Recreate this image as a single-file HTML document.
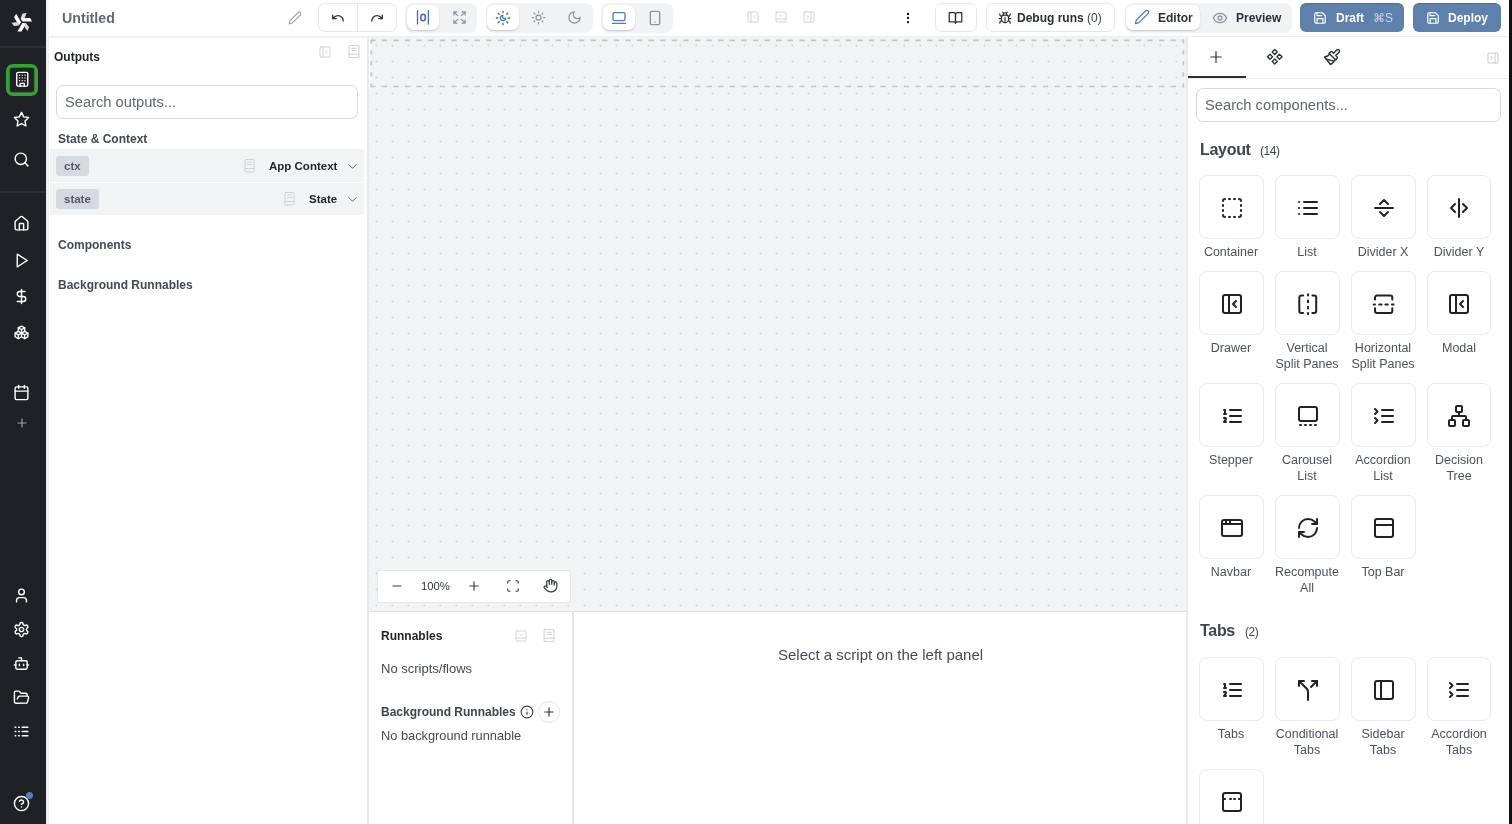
<!DOCTYPE html>
<html><head><meta charset="utf-8">
<style>
*{box-sizing:border-box;margin:0;padding:0}
html,body{width:1512px;height:824px;overflow:hidden;background:#fff;font-family:"Liberation Sans",sans-serif;color:#2d3748}
.a{position:absolute}
svg{display:block;position:absolute;fill:none;stroke-linecap:round;stroke-linejoin:round}
.t{position:absolute;white-space:nowrap;line-height:1}
body{-webkit-font-smoothing:antialiased}
.t,.lbl{will-change:transform}
#sidebar{position:absolute;left:0;top:0;width:46px;height:824px;background:#202125}
.sdiv{position:absolute;left:0;width:46px;height:2px;background:#2c2f36}
.si{stroke:#fff;stroke-width:2}
#header{position:absolute;left:46px;top:0;width:1466px;height:38px;background:#fff;border-bottom:2px solid #eeeff1}
#left{position:absolute;left:46px;top:38px;width:323px;height:786px;background:#fff;border-left:3px solid #eef0f2;border-right:2px solid #e6e8eb}
#canvas{position:absolute;left:369px;top:37px;width:817px;height:575px;background-color:#f2f3f5;border-bottom:1px solid #dfe1e5}
#right{position:absolute;left:1186px;top:37px;width:326px;height:787px;background:#fff;border-left:2px solid #e8eaed}
#bottom{position:absolute;left:369px;top:612px;width:817px;height:212px;background:#fff}
.box{position:absolute;width:64.5px;height:64px;border:1.5px solid #eaebee;border-radius:8px;background:#fff}
.box svg{left:18.7px;top:18.7px;stroke:#1f2329;stroke-width:2}
.lbl{position:absolute;width:80px;text-align:center;font-size:12.5px;line-height:16px;color:#4b5260}
.grp{position:absolute;top:3px;height:29.5px;background:#f1f2f4;border-radius:8px}
.act{position:absolute;top:1.6px;height:25.8px;background:#fff;border-radius:7px;box-shadow:0 1px 2px rgba(0,0,0,.12),0 1px 1px rgba(0,0,0,.06)}
.obtn{position:absolute;top:2.5px;height:29.5px;border:1px solid #e6e7ea;border-radius:7px;background:#fff}
.pbtn{position:absolute;top:2.5px;height:29.8px;background:#5e80ad;border-radius:6px;border-top:1px solid #4f6d95}
</style></head><body>

<!-- SIDEBAR -->
<div id="sidebar">
  <svg style="left:0;top:0" width="46" height="46" viewBox="0 0 46 46"><g transform="translate(21.9,22.3)">
<g id="bl"><path d="M-1.3 -4.3 L8.2 -4.3 L10.2 -0.7 L0.4 -0.7 Z" fill="#fff"/><path d="M0.7 -8.7 L4.8 -9.2 L2.7 -4.4 L-1.3 -4.1 Z" fill="#dcdcdc"/></g>
<use href="#bl" transform="rotate(-120)"/><use href="#bl" transform="rotate(-240)"/></g></svg>
  <div class="sdiv" style="top:46px"></div>
  <div class="a" style="left:6.3px;top:63.7px;width:31.7px;height:32.2px;border:3.2px solid #34a334;border-radius:7px;box-shadow:inset 0 0 0 0.6px #5e9f5e, inset 0 0 2px 1.5px #0b420b"></div>
  <svg class="si" style="left:13.8px;top:71px;stroke-width:2" width="16.5" height="16.5" viewBox="0 0 24 24"><rect width="16" height="20" x="4" y="2" rx="2"/><path d="M9 22v-4h6v4"/><path d="M8 6h.01M16 6h.01M12 6h.01M12 10h.01M12 14h.01M16 10h.01M16 14h.01M8 10h.01M8 14h.01"/></svg>
  <svg class="si" style="left:13px;top:111px" width="17" height="17" viewBox="0 0 24 24"><polygon points="12 2 15.09 8.26 22 9.27 17 14.14 18.18 21.02 12 17.77 5.82 21.02 7 14.14 2 9.27 8.91 8.26 12 2"/></svg>
  <svg class="si" style="left:13px;top:151px" width="17" height="17" viewBox="0 0 24 24"><circle cx="11" cy="11" r="8"/><path d="m21 21-4.3-4.3"/></svg>
  <div class="sdiv" style="top:191px"></div>
  <svg class="si" style="left:13px;top:215px" width="17" height="17" viewBox="0 0 24 24"><path d="M15 21v-8a1 1 0 0 0-1-1h-4a1 1 0 0 0-1 1v8"/><path d="M3 10a2 2 0 0 1 .709-1.528l7-5.999a2 2 0 0 1 2.582 0l7 5.999A2 2 0 0 1 21 10v9a2 2 0 0 1-2 2H5a2 2 0 0 1-2-2z"/></svg>
  <svg class="si" style="left:13px;top:252px" width="17" height="17" viewBox="0 0 24 24"><polygon points="6 3 20 12 6 21 6 3"/></svg>
  <svg class="si" style="left:13px;top:288px" width="17" height="17" viewBox="0 0 24 24"><line x1="12" x2="12" y1="2" y2="22"/><path d="M17 5H9.5a3.5 3.5 0 0 0 0 7h5a3.5 3.5 0 0 1 0 7H6"/></svg>
  <svg class="si" style="left:13px;top:324px" width="17" height="17" viewBox="0 0 24 24"><path d="M12 3 7.5 5.5v5L12 13l4.5-2.5v-5z"/><path d="M7.5 10.5 3 13v5l4.5 2.5L12 18v-5"/><path d="M16.5 10.5 21 13v5l-4.5 2.5L12 18"/><path d="M7.5 5.5 12 8l4.5-2.5M12 8v5M3 13l4.5 2.5L12 13M12 13l4.5 2.5L21 13M7.5 15.5v5M16.5 15.5v5"/></svg>
  <svg class="si" style="left:13px;top:384px" width="17" height="17" viewBox="0 0 24 24"><rect width="18" height="18" x="3" y="4" rx="2"/><line x1="16" x2="16" y1="2" y2="6"/><line x1="8" x2="8" y1="2" y2="6"/><line x1="3" x2="21" y1="10" y2="10"/></svg>
  <svg style="left:15px;top:416px;stroke:#9ea3ab;stroke-width:2" width="14" height="14" viewBox="0 0 24 24"><path d="M5 12h14M12 5v14"/></svg>
  <svg class="si" style="left:13px;top:587px" width="17" height="17" viewBox="0 0 24 24"><path d="M19 21v-2a4 4 0 0 0-4-4H9a4 4 0 0 0-4 4v2"/><circle cx="12" cy="7" r="4"/></svg>
  <svg class="si" style="left:13px;top:621px" width="17" height="17" viewBox="0 0 24 24"><path d="M12.22 2h-.44a2 2 0 0 0-2 2v.18a2 2 0 0 1-1 1.73l-.43.25a2 2 0 0 1-2 0l-.15-.08a2 2 0 0 0-2.73.73l-.22.38a2 2 0 0 0 .73 2.73l.15.1a2 2 0 0 1 1 1.72v.51a2 2 0 0 1-1 1.74l-.15.09a2 2 0 0 0-.73 2.73l.22.38a2 2 0 0 0 2.73.73l.15-.08a2 2 0 0 1 2 0l.43.25a2 2 0 0 1 1 1.73V20a2 2 0 0 0 2 2h.44a2 2 0 0 0 2-2v-.18a2 2 0 0 1 1-1.73l.43-.25a2 2 0 0 1 2 0l.15.08a2 2 0 0 0 2.73-.73l.22-.39a2 2 0 0 0-.73-2.73l-.15-.08a2 2 0 0 1-1-1.74v-.5a2 2 0 0 1 1-1.74l.15-.09a2 2 0 0 0 .73-2.73l-.22-.38a2 2 0 0 0-2.73-.73l-.15.08a2 2 0 0 1-2 0l-.43-.25a2 2 0 0 1-1-1.73V4a2 2 0 0 0-2-2z"/><circle cx="12" cy="12" r="3"/></svg>
  <svg class="si" style="left:13px;top:655px" width="17" height="17" viewBox="0 0 24 24"><path d="M12 8V4H8"/><rect width="16" height="12" x="4" y="8" rx="2"/><path d="M2 14h2M20 14h2M15 13v2M9 13v2"/></svg>
  <svg class="si" style="left:13px;top:689px" width="17" height="17" viewBox="0 0 24 24"><path d="m6 14 1.5-2.9A2 2 0 0 1 9.24 10H20a2 2 0 0 1 1.94 2.5l-1.54 6a2 2 0 0 1-1.95 1.5H4a2 2 0 0 1-2-2V5a2 2 0 0 1 2-2h3.9a2 2 0 0 1 1.69.9l.81 1.2a2 2 0 0 0 1.67.9H18a2 2 0 0 1 2 2v2"/></svg>
  <svg class="si" style="left:13px;top:723px" width="17" height="17" viewBox="0 0 24 24"><path d="M13 12h8M13 18h8M13 6h8M3 12h1M3 18h1M3 6h1M8 12h1M8 18h1M8 6h1"/></svg>
  <svg class="si" style="left:13px;top:795px" width="17" height="17" viewBox="0 0 24 24"><circle cx="12" cy="12" r="10"/><path d="M9.09 9a3 3 0 0 1 5.83 1c0 2-3 3-3 3"/><path d="M12 17h.01"/></svg>
  <div class="a" style="left:26px;top:792px;width:7px;height:7px;border-radius:50%;background:#5a7eb0"></div>
</div>

<!-- HEADER -->
<div id="header"></div>
<div class="t" style="left:62px;top:11px;font-size:14.2px;font-weight:700;color:#626975">Untitled</div>
<svg style="left:288px;top:11px;stroke:#a0a5ad;stroke-width:2" width="14" height="14" viewBox="0 0 24 24"><path d="M17 3a2.85 2.83 0 1 1 4 4L7.5 20.5 2 22l1.5-5.5Z"/></svg>
<div class="obtn" style="left:318px;width:78.5px"></div>
<div class="a" style="left:357px;top:3px;width:1px;height:29px;background:#e6e7ea"></div>
<svg style="left:331px;top:11px;stroke:#2a2f38;stroke-width:2.2" width="14" height="14" viewBox="0 0 24 24"><path d="M3 7v6h6"/><path d="M21 17a9 9 0 0 0-9-9 9 9 0 0 0-6 2.3L3 13"/></svg>
<svg style="left:370px;top:11px;stroke:#2a2f38;stroke-width:2.2" width="14" height="14" viewBox="0 0 24 24"><path d="M21 7v6h-6"/><path d="M3 17a9 9 0 0 1 9-9 9 9 0 0 1 6 2.3l3 2.7"/></svg>

<div class="grp" style="left:405px;width:72px"></div>
<div class="act" style="left:406.7px;top:4.6px;width:32px"></div>
<svg style="left:404px;top:2px;stroke:#4a6cae" width="36" height="32" viewBox="0 0 36 32"><path d="M13.5 8.6v13.4M24.4 8.6v13.4" stroke-width="1.3"/><rect x="16.9" y="12.4" width="4.4" height="6.4" rx="2.2" stroke-width="1.6"/></svg>
<svg style="left:452px;top:10px;stroke:#8e949c;stroke-width:2" width="15" height="15" viewBox="0 0 24 24"><path d="m21 21-6-6m6 6v-4.8m0 4.8h-4.8"/><path d="M3 16.2V21m0 0h4.8M3 21l6-6"/><path d="M21 7.8V3m0 0h-4.8M21 3l-6 6"/><path d="M3 7.8V3m0 0h4.8M3 3l6 6"/></svg>

<div class="grp" style="left:486px;width:106.5px"></div>
<div class="act" style="left:487px;top:4.6px;width:32px"></div>
<svg style="left:495px;top:9.5px;stroke-width:2" width="16" height="16" viewBox="0 0 24 24"><path stroke="#4f7bc4" d="M12 8a2.83 2.83 0 0 0 4 4 4 4 0 1 1-4-4"/><path stroke="#5b616b" d="M12 2v2M12 20v2m-7.1-17.1 1.4 1.4m11.4 11.4 1.4 1.4M2 12h2m16 0h2M6.3 17.7l-1.4 1.4M19.1 4.9l-1.4 1.4"/></svg>
<svg style="left:531px;top:10px;stroke:#8e949c;stroke-width:2" width="15" height="15" viewBox="0 0 24 24"><circle cx="12" cy="12" r="4"/><path d="M12 2v2M12 20v2m-7.07-17.07 1.41 1.41m11.32 11.32 1.41 1.41M2 12h2m16 0h2M6.34 17.66l-1.41 1.41M19.07 4.93l-1.41 1.41"/></svg>
<svg style="left:567px;top:10px;stroke:#8e949c;stroke-width:2" width="15" height="15" viewBox="0 0 24 24"><path d="M12 3a6 6 0 0 0 9 9 9 9 0 1 1-9-9Z"/></svg>

<div class="grp" style="left:601px;width:71.5px"></div>
<div class="act" style="left:602.8px;top:4.6px;width:32.2px"></div>
<svg style="left:611px;top:10px;stroke:#4f7bc4;stroke-width:2" width="16" height="16" viewBox="0 0 24 24"><rect width="18" height="12" x="3" y="4" rx="2"/><line x1="2" x2="22" y1="20" y2="20"/></svg>
<svg style="left:647px;top:10px;stroke:#8e949c;stroke-width:2" width="16" height="16" viewBox="0 0 24 24"><rect width="14" height="20" x="5" y="2" rx="2"/><path d="M12 18h.01"/></svg>

<svg style="left:747px;top:11px;stroke:#cfd2d7;stroke-width:2" width="12" height="12" viewBox="0 0 24 24"><rect width="20" height="20" x="2" y="2" rx="2"/><path d="M8 2v20"/><path d="m16 15-3-3 3-3"/></svg>
<svg style="left:775px;top:11px;stroke:#cfd2d7;stroke-width:2" width="12" height="12" viewBox="0 0 24 24"><rect width="20" height="20" x="2" y="2" rx="2"/><path d="M2 16h20"/><path d="m15 8-3 3-3-3"/></svg>
<svg style="left:803px;top:11px;stroke:#cfd2d7;stroke-width:2" width="12" height="12" viewBox="0 0 24 24"><rect width="20" height="20" x="2" y="2" rx="2"/><path d="M16 2v20"/><path d="m8 9 3 3-3 3"/></svg>
<svg style="left:901px;top:10.5px;fill:#111;stroke:#111;stroke-width:2" width="14" height="14" viewBox="0 0 24 24"><circle cx="12" cy="12" r="1"/><circle cx="12" cy="5" r="1"/><circle cx="12" cy="19" r="1"/></svg>

<div class="obtn" style="left:935.3px;width:41.3px"></div>
<svg style="left:948px;top:10px;stroke:#2a2f38;stroke-width:2" width="15" height="15" viewBox="0 0 24 24"><path d="M2 4h7a3 3 0 0 1 3 3v14a2 2 0 0 0-2-2H2z"/><path d="M22 4h-7a3 3 0 0 0-3 3v14a2 2 0 0 1 2-2h8z"/></svg>
<div class="obtn" style="left:985.6px;width:129.8px"></div>
<svg style="left:998px;top:10.5px;stroke:#2a2f38;stroke-width:2" width="14" height="14" viewBox="0 0 24 24"><path d="m8 2 1.88 1.88M14.12 3.88 16 2M9 7.13v-1a3.003 3.003 0 1 1 6 0v1"/><path d="M12 20c-3.3 0-6-2.7-6-6v-3a4 4 0 0 1 4-4h4a4 4 0 0 1 4 4v3c0 3.3-2.7 6-6 6M12 20v-9M6.53 9C4.6 8.8 3 7.1 3 5M6 13H2M3 21c0-2.1 1.7-3.9 3.8-4M20.97 5c0 2.1-1.6 3.8-3.5 4M22 13h-4M17.2 17c2.1.1 3.8 1.9 3.8 4"/></svg>
<div class="t" style="left:1016.5px;top:12px;font-size:12px;font-weight:700;color:#2a2f38">Debug runs</div>
<div class="t" style="left:1087px;top:12px;font-size:12px;color:#3d4350">(0)</div>

<div class="grp" style="left:1124.6px;width:167.4px"></div>
<div class="act" style="left:1126px;top:4.6px;width:74px"></div>
<svg style="left:1133.5px;top:9.3px;stroke:#4f7bc4;stroke-width:1.9" width="16" height="16" viewBox="0 0 24 24"><path d="M17 3a2.85 2.83 0 1 1 4 4L7.5 20.5 2 22l1.5-5.5Z"/></svg>
<div class="t" style="left:1157.5px;top:12px;font-size:12px;font-weight:700;color:#2a2f38">Editor</div>
<svg style="left:1211.5px;top:9.5px;stroke:#8e949c;stroke-width:1.9" width="16" height="16" viewBox="0 0 24 24"><path d="M2 12s3-7 10-7 10 7 10 7-3 7-10 7-10-7-10-7Z"/><circle cx="12" cy="12" r="3"/></svg>
<div class="t" style="left:1236px;top:12px;font-size:12px;font-weight:700;color:#2a2f38">Preview</div>

<div class="pbtn" style="left:1300px;width:104.3px"></div>
<svg style="left:1313px;top:10.5px;stroke:#fff;stroke-width:2" width="14" height="14" viewBox="0 0 24 24"><path d="M19 21H5a2 2 0 0 1-2-2V5a2 2 0 0 1 2-2h11l5 5v11a2 2 0 0 1-2 2z"/><path d="M17 21v-8H7v8M7 3v5h8"/></svg>
<div class="t" style="left:1336.4px;top:12px;font-size:12px;font-weight:700;color:#fff">Draft</div>
<div class="t" style="left:1373px;top:12px;font-size:12px;color:#c9d6e8">⌘S</div>
<div class="pbtn" style="left:1412.8px;width:88px"></div>
<svg style="left:1425.5px;top:10.5px;stroke:#fff;stroke-width:2" width="14" height="14" viewBox="0 0 24 24"><path d="M19 21H5a2 2 0 0 1-2-2V5a2 2 0 0 1 2-2h11l5 5v11a2 2 0 0 1-2 2z"/><path d="M17 21v-8H7v8M7 3v5h8"/></svg>
<div class="t" style="left:1448.4px;top:12px;font-size:12px;font-weight:700;color:#fff">Deploy</div>


<div class="a" style="left:46px;top:0;width:3px;height:38px;background:#f3f4f6"></div>
<!-- LEFT PANEL -->
<div id="left"></div>
<div class="t" style="left:54px;top:51px;font-size:12px;font-weight:700;color:#1f2329">Outputs</div>
<svg style="left:319px;top:45.5px;stroke:#cfd2d7;stroke-width:2" width="12" height="12" viewBox="0 0 24 24"><rect width="20" height="20" x="2" y="2" rx="2"/><path d="M8 2v20"/><path d="m16 15-3-3 3-3"/></svg>
<svg style="left:347.5px;top:45px;stroke:#cfd2d7;stroke-width:2" width="12" height="13" viewBox="0 0 22 24"><rect width="18" height="22" x="2" y="1" rx="2"/><path d="M2 17h18M7 6h8M7 10h8"/></svg>
<div class="a" style="left:56px;top:85px;width:301.5px;height:34px;border:1px solid #d6d9de;border-radius:7px"></div>
<div class="t" style="left:65.4px;top:95px;font-size:14.7px;color:#5f6671">Search outputs...</div>
<div class="t" style="left:58px;top:132.7px;font-size:12px;font-weight:700;color:#434a57">State &amp; Context</div>
<div class="a" style="left:50px;top:149.3px;width:313.5px;height:32.5px;background:#f2f3f5"></div>
<div class="a" style="left:56px;top:155.7px;width:32.6px;height:20px;background:#d6d9de;border-radius:3px"></div>
<div class="t" style="left:64.2px;top:161px;font-size:11.5px;font-weight:700;color:#545b66">ctx</div>
<svg style="left:243.5px;top:159px;stroke:#c9cdd3;stroke-width:1.8" width="11" height="13.5" viewBox="0 0 22 27"><rect width="18" height="25" x="2" y="1" rx="2"/><path d="M2 19h18M7 6h8M7 11h8"/></svg>
<div class="t" style="left:269.4px;top:160.8px;font-size:11.5px;font-weight:700;color:#1f2329">App Context</div>
<svg style="left:347px;top:160.5px;stroke:#4a505b;stroke-width:1.9" width="11" height="11" viewBox="0 0 24 24"><path d="m4 8 8 8 8-8"/></svg>
<div class="a" style="left:50px;top:183px;width:313.5px;height:31.6px;background:#f2f3f5"></div>
<div class="a" style="left:56px;top:188.6px;width:43.3px;height:20px;background:#d6d9de;border-radius:3px"></div>
<div class="t" style="left:64.1px;top:194px;font-size:11.5px;font-weight:700;color:#545b66">state</div>
<svg style="left:283.5px;top:192px;stroke:#c9cdd3;stroke-width:1.8" width="11" height="13.5" viewBox="0 0 22 27"><rect width="18" height="25" x="2" y="1" rx="2"/><path d="M2 19h18M7 6h8M7 11h8"/></svg>
<div class="t" style="left:308.9px;top:193.8px;font-size:11.5px;font-weight:700;color:#1f2329">State</div>
<svg style="left:347px;top:193.5px;stroke:#4a505b;stroke-width:1.9" width="11" height="11" viewBox="0 0 24 24"><path d="m4 8 8 8 8-8"/></svg>
<div class="t" style="left:58px;top:239px;font-size:12px;font-weight:700;color:#434a57">Components</div>
<div class="t" style="left:58px;top:279px;font-size:12px;font-weight:700;color:#434a57">Background Runnables</div>


<!-- CANVAS -->
<div id="canvas"><svg style="left:0;top:0" width="817" height="574">
<defs><pattern id="dots" x="0" y="0" width="16" height="16" patternUnits="userSpaceOnUse">
<path d="M6.4 8.5h2M7.4 7.5v2" stroke="#cfd1d5" stroke-width="0.9" stroke-linecap="butt"/>
</pattern></defs>
<rect x="0" y="0" width="817" height="574" fill="url(#dots)"/>
<rect x="0" y="0.5" width="1.4" height="51" fill="#fff"/>
<g stroke="#c2c5ca" stroke-width="1.7" stroke-linecap="butt" fill="none">
<path d="M1.5 3.4H815.2M1.5 49.5H815.2" stroke-dasharray="5.4 6.2" stroke-dashoffset="0.4"/>
<path d="M2.3 2.6V50.3M814.4 2.6V50.3" stroke-dasharray="4.4 6.6" stroke-dashoffset="0.4"/>
</g>
</svg>
<div class="a" style="left:7.5px;top:532.5px;width:194px;height:33px;background:#fff;border:1px solid #e3e5e8;border-radius:2px"></div>
<svg style="left:20.5px;top:541.5px;stroke:#3a3f48;stroke-width:2" width="14" height="14" viewBox="0 0 24 24"><path d="M5 12h14"/></svg>
<div class="t" style="left:51.5px;top:543.5px;font-size:11.3px;color:#333842">100%</div>
<svg style="left:98px;top:541.5px;stroke:#3a3f48;stroke-width:2" width="14" height="14" viewBox="0 0 24 24"><path d="M5 12h14M12 5v14"/></svg>
<svg style="left:136.5px;top:541.5px;stroke:#3a3f48;stroke-width:2" width="14" height="14" viewBox="0 0 24 24"><path d="M3 7V5a2 2 0 0 1 2-2h2M17 3h2a2 2 0 0 1 2 2v2M21 17v2a2 2 0 0 1-2 2h-2M7 21H5a2 2 0 0 1-2-2v-2"/></svg>
<svg style="left:174px;top:541px;stroke:#3a3f48;stroke-width:2" width="15" height="15" viewBox="0 0 24 24"><path d="M18 11V6a2 2 0 0 0-2-2a2 2 0 0 0-2 2"/><path d="M14 10V4a2 2 0 0 0-2-2a2 2 0 0 0-2 2v2"/><path d="M10 10.5V6a2 2 0 0 0-2-2a2 2 0 0 0-2 2v8"/><path d="M18 8a2 2 0 1 1 4 0v6a8 8 0 0 1-8 8h-2c-2.8 0-4.5-.86-5.99-2.340l-3.6-3.6a2 2 0 0 1 2.83-2.82L7 15"/></svg>
</div>

<!-- BOTTOM -->
<div id="bottom"></div>
<div class="a" style="left:572px;top:612px;width:1.5px;height:212px;background:#e3e5e8"></div>
<div class="t" style="left:380.6px;top:630px;font-size:12px;font-weight:700;color:#1f2329">Runnables</div>
<svg style="left:514.5px;top:629.5px;stroke:#cfd2d7;stroke-width:2" width="12" height="12" viewBox="0 0 24 24"><rect width="20" height="20" x="2" y="2" rx="2"/><path d="M2 16h20"/><path d="m15 8-3 3-3-3"/></svg>
<svg style="left:542.5px;top:629px;stroke:#cfd2d7;stroke-width:2" width="12" height="13" viewBox="0 0 22 24"><rect width="18" height="22" x="2" y="1" rx="2"/><path d="M2 17h18M7 6h8M7 10h8"/></svg>
<div class="t" style="left:380.6px;top:661.5px;font-size:13px;color:#444a55">No scripts/flows</div>
<div class="t" style="left:380.6px;top:705.5px;font-size:12px;font-weight:700;color:#3e4450">Background Runnables</div>
<svg style="left:519.5px;top:705px;stroke:#3e4450;stroke-width:2" width="14" height="14" viewBox="0 0 24 24"><circle cx="12" cy="12" r="10"/><path d="M12 16v-4M12 8h.01"/></svg>
<div class="a" style="left:537.5px;top:701px;width:22px;height:22px;border:1px solid #e3e5e8;border-radius:50%"></div>
<svg style="left:541.5px;top:705px;stroke:#2a2f38;stroke-width:2" width="14" height="14" viewBox="0 0 24 24"><path d="M5 12h14M12 5v14"/></svg>
<div class="t" style="left:380.6px;top:729.5px;font-size:12.8px;color:#444a55">No background runnable</div>
<div class="t" style="left:777.7px;top:647px;font-size:15px;color:#454b56">Select a script on the left panel</div>


<!-- RIGHT -->
<div id="right"></div>
<svg style="left:1208.4px;top:49px;stroke:#2f343d;stroke-width:1.8" width="16" height="16" viewBox="0 0 24 24"><path d="M4 12h16M12 4v16"/></svg>
<svg style="left:1265.6px;top:48.2px;stroke:#2f343d;stroke-width:1.9" width="17.5" height="17.5" viewBox="0 0 24 24"><path d="M5.5 8.5 9 12l-3.5 3.5L2 12l3.5-3.5Z"/><path d="m12 2 3.5 3.5L12 9 8.5 5.5 12 2Z"/><path d="M18.5 8.5 22 12l-3.5 3.5L15 12l3.5-3.5Z"/><path d="m12 15 3.5 3.5L12 22l-3.5-3.5L12 15Z"/></svg>
<svg style="left:1323.4px;top:47.7px;stroke:#2f343d;stroke-width:1.9" width="18" height="18" viewBox="0 0 24 24"><path d="M18.37 2.63 14 7l-1.59-1.59a2 2 0 0 0-2.82 0L8 7l9 9 1.59-1.59a2 2 0 0 0 0-2.82L17 10l4.37-4.37a2.12 2.12 0 1 0-3-3Z"/><path d="M9 8c-2 3-4 3.5-7 4l8 10c2-1 6-5 6-7"/><path d="M14.5 17.5 4.5 15"/></svg>
<div class="a" style="left:1188px;top:77.5px;width:321px;height:1.5px;background:#e9ebee"></div>
<div class="a" style="left:1187.5px;top:76px;width:58px;height:2.2px;background:#2d3039"></div>
<svg style="left:1486.5px;top:52px;stroke:#c9ccd2;stroke-width:2.1" width="12" height="12" viewBox="0 0 24 24"><rect width="20" height="20" x="2" y="2" rx="2"/><path d="M16 2v20"/><path d="m8 9 3 3-3 3"/></svg>
<div class="a" style="left:1196px;top:87.8px;width:304.5px;height:34px;border:1px solid #d6d9de;border-radius:7px"></div>
<div class="t" style="left:1205px;top:98px;font-size:14.7px;color:#5f6671">Search components...</div>
<div class="t" style="left:1200px;top:141.7px;font-size:16px;letter-spacing:-0.3px;font-weight:700;color:#3e4450">Layout</div>
<div class="t" style="left:1259.6px;top:144.8px;font-size:12px;letter-spacing:-0.45px;color:#3e4450">(14)</div>
<div class="box" style="left:1199.20px;top:175.0px"><svg width="24" height="24" viewBox="0 0 24 24" style="left:19.5px;top:19.6px"><path d="M5 3a2 2 0 0 0-2 2M19 3a2 2 0 0 1 2 2M21 19a2 2 0 0 1-2 2M5 21a2 2 0 0 1-2-2M9 3h1M9 21h1M14 3h1M14 21h1M3 9v1M21 9v1M3 14v1M21 14v1"/></svg></div>
<div class="lbl" style="left:1191.45px;top:244.0px">Container</div>
<div class="box" style="left:1275.10px;top:175.0px"><svg width="24" height="24" viewBox="0 0 24 24" style="left:19.5px;top:19.6px"><path d="M8 6h13M8 12h13M8 18h13M3 6h.01M3 12h.01M3 18h.01"/></svg></div>
<div class="lbl" style="left:1267.35px;top:244.0px">List</div>
<div class="box" style="left:1351.00px;top:175.0px"><svg width="24" height="24" viewBox="0 0 24 24" style="left:19.5px;top:19.6px"><line x1="3" x2="21" y1="12" y2="12"/><polyline points="8 8 12 4 16 8"/><polyline points="16 16 12 20 8 16"/></svg></div>
<div class="lbl" style="left:1343.25px;top:244.0px">Divider X</div>
<div class="box" style="left:1426.90px;top:175.0px"><svg width="24" height="24" viewBox="0 0 24 24" style="left:19.5px;top:19.6px"><line x1="12" x2="12" y1="3" y2="21"/><polyline points="8 8 4 12 8 16"/><polyline points="16 16 20 12 16 8"/></svg></div>
<div class="lbl" style="left:1419.15px;top:244.0px">Divider Y</div>
<div class="box" style="left:1199.20px;top:271.1px"><svg width="24" height="24" viewBox="0 0 24 24" style="left:19.5px;top:19.6px"><rect width="18" height="18" x="3" y="3" rx="2"/><path d="M9 3v18"/><path d="m16 15-3-3 3-3"/></svg></div>
<div class="lbl" style="left:1191.45px;top:340.1px">Drawer</div>
<div class="box" style="left:1275.10px;top:271.1px"><svg width="24" height="24" viewBox="0 0 24 24" style="left:19.5px;top:19.6px"><path d="M7.1 3.6H5.3a2 2 0 0 0-2 2v13.3a2 2 0 0 0 2 2h1.8"/><path d="M16.4 3.6h1.8a2 2 0 0 1 2 2v13.3a2 2 0 0 1-2 2h-1.8"/><path d="M12 2.3v1.3M12 8.5v1.7M12 14.7v1.7M12 20.9v1.3"/></svg></div>
<div class="lbl" style="left:1267.35px;top:340.1px">Vertical<br>Split Panes</div>
<div class="box" style="left:1351.00px;top:271.1px"><svg width="24" height="24" viewBox="0 0 24 24" style="left:19.5px;top:19.6px"><path d="M3 7.5V5.6a2 2 0 0 1 2-2h13.3a2 2 0 0 1 2 2v1.9"/><path d="M3 16.3v2.6a2 2 0 0 0 2 2h13.3a2 2 0 0 0 2-2v-2.6"/><path d="M1.7 12.4h1.3M7.2 12.4h2.4M13.4 12.4h2.4M19.9 12.4h1.7"/></svg></div>
<div class="lbl" style="left:1343.25px;top:340.1px">Horizontal<br>Split Panes</div>
<div class="box" style="left:1426.90px;top:271.1px"><svg width="24" height="24" viewBox="0 0 24 24" style="left:19.5px;top:19.6px"><rect width="18" height="18" x="3" y="3" rx="2"/><path d="M9 3v18"/><path d="m16 15-3-3 3-3"/></svg></div>
<div class="lbl" style="left:1419.15px;top:340.1px">Modal</div>
<div class="box" style="left:1199.20px;top:383.2px"><svg width="24" height="24" viewBox="0 0 24 24" style="left:19.5px;top:19.6px"><path d="M10 6h11M10 12h11M10 18h11"/><path d="M4 6h1v4"/><path d="M4 10h2"/><path d="M6 18H4c0-1 2-2 2-3s-1-1.5-2-1"/></svg></div>
<div class="lbl" style="left:1191.45px;top:452.2px">Stepper</div>
<div class="box" style="left:1275.10px;top:383.2px"><svg width="24" height="24" viewBox="0 0 24 24" style="left:19.5px;top:19.6px"><rect width="18" height="14" x="3" y="3" rx="2"/><path d="M4 21h1M9 21h1M14 21h1M19 21h1"/></svg></div>
<div class="lbl" style="left:1267.35px;top:452.2px">Carousel<br>List</div>
<div class="box" style="left:1351.00px;top:383.2px"><svg width="24" height="24" viewBox="0 0 24 24" style="left:19.5px;top:19.6px"><path d="m3 10 2.5-2.5L3 5"/><path d="m3 19 2.5-2.5L3 14"/><path d="M10 6h11M21 12H10M21 18H10"/></svg></div>
<div class="lbl" style="left:1343.25px;top:452.2px">Accordion<br>List</div>
<div class="box" style="left:1426.90px;top:383.2px"><svg width="24" height="24" viewBox="0 0 24 24" style="left:19.5px;top:19.6px"><rect x="16" y="16" width="6" height="6" rx="1"/><rect x="2" y="16" width="6" height="6" rx="1"/><rect x="9" y="2" width="6" height="6" rx="1"/><path d="M5 16v-3a1 1 0 0 1 1-1h12a1 1 0 0 1 1 1v3"/><path d="M12 12V8"/></svg></div>
<div class="lbl" style="left:1419.15px;top:452.2px">Decision<br>Tree</div>
<div class="box" style="left:1199.20px;top:495.3px"><svg width="24" height="24" viewBox="0 0 24 24" style="left:19.5px;top:19.6px"><rect x="2" y="4" width="20" height="16" rx="2"/><path d="M10 4v4M2 8h20M6 4v4"/></svg></div>
<div class="lbl" style="left:1191.45px;top:564.3px">Navbar</div>
<div class="box" style="left:1275.10px;top:495.3px"><svg width="24" height="24" viewBox="0 0 24 24" style="left:19.5px;top:19.6px"><path d="M3 12a9 9 0 0 1 9-9 9.75 9.75 0 0 1 6.74 2.74L21 8"/><path d="M21 3v5h-5"/><path d="M21 12a9 9 0 0 1-9 9 9.75 9.75 0 0 1-6.74-2.74L3 16"/><path d="M8 16H3v5"/></svg></div>
<div class="lbl" style="left:1267.35px;top:564.3px">Recompute<br>All</div>
<div class="box" style="left:1351.00px;top:495.3px"><svg width="24" height="24" viewBox="0 0 24 24" style="left:19.5px;top:19.6px"><rect width="18" height="18" x="3" y="3" rx="2"/><path d="M3 9h18"/></svg></div>
<div class="lbl" style="left:1343.25px;top:564.3px">Top Bar</div>
<div class="t" style="left:1200.2px;top:623.2px;font-size:16px;letter-spacing:-0.3px;font-weight:700;color:#3e4450">Tabs</div>
<div class="t" style="left:1244.5px;top:626.3px;font-size:12px;letter-spacing:-0.45px;color:#3e4450">(2)</div>
<div class="box" style="left:1199.20px;top:657.1px"><svg width="24" height="24" viewBox="0 0 24 24" style="left:19.5px;top:19.6px"><path d="M10 6h11M10 12h11M10 18h11"/><path d="M4 6h1v4"/><path d="M4 10h2"/><path d="M6 18H4c0-1 2-2 2-3s-1-1.5-2-1"/></svg></div>
<div class="lbl" style="left:1191.45px;top:726.1px">Tabs</div>
<div class="box" style="left:1275.10px;top:657.1px"><svg width="24" height="24" viewBox="0 0 24 24" style="left:19.5px;top:19.6px"><path d="M16 3h5v5"/><path d="M8 3H3v5"/><path d="M12 22v-8.3a4 4 0 0 0-1.172-2.872L3 3"/><path d="m15 9 6-6"/></svg></div>
<div class="lbl" style="left:1267.35px;top:726.1px">Conditional<br>Tabs</div>
<div class="box" style="left:1351.00px;top:657.1px"><svg width="24" height="24" viewBox="0 0 24 24" style="left:19.5px;top:19.6px"><rect width="18" height="18" x="3" y="3" rx="2"/><path d="M9 3v18"/></svg></div>
<div class="lbl" style="left:1343.25px;top:726.1px">Sidebar<br>Tabs</div>
<div class="box" style="left:1426.90px;top:657.1px"><svg width="24" height="24" viewBox="0 0 24 24" style="left:19.5px;top:19.6px"><path d="m3 10 2.5-2.5L3 5"/><path d="m3 19 2.5-2.5L3 14"/><path d="M10 6h11M21 12H10M21 18H10"/></svg></div>
<div class="lbl" style="left:1419.15px;top:726.1px">Accordion<br>Tabs</div>
<div class="box" style="left:1199.20px;top:769.3px"><svg width="24" height="24" viewBox="0 0 24 24" style="left:19.5px;top:19.6px"><rect width="18" height="18" x="3" y="3" rx="2"/><path d="M14 9h1M19 9h2M3 9h2M10 9h1"/></svg></div>
<div class="lbl" style="left:1191.45px;top:838.3px"></div>


<div class="a" style="left:1509px;top:0;width:3px;height:824px;background:#111"></div>
</body></html>
